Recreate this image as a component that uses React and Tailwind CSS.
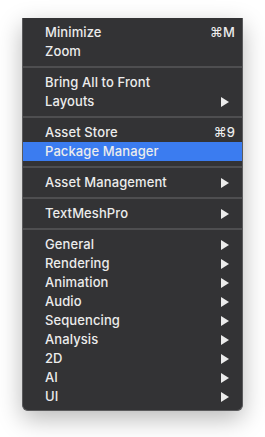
import React from 'react'

const sections = [
  [
    { label: 'Minimize', shortcut: '⌘M' },
    { label: 'Zoom' },
  ],
  [
    { label: 'Bring All to Front' },
    { label: 'Layouts', sub: true },
  ],
  [
    { label: 'Asset Store', shortcut: '⌘9' },
    { label: 'Package Manager', active: true },
  ],
  [{ label: 'Asset Management', sub: true }],
  [{ label: 'TextMeshPro', sub: true }],
  [
    { label: 'General', sub: true },
    { label: 'Rendering', sub: true },
    { label: 'Animation', sub: true },
    { label: 'Audio', sub: true },
    { label: 'Sequencing', sub: true },
    { label: 'Analysis', sub: true },
    { label: '2D', sub: true },
    { label: 'AI', sub: true },
    { label: 'UI', sub: true },
  ],
]

function Arrow() {
  return (
    <svg width="8" height="10" viewBox="0 0 8 10" className="mr-[13px]">
      <path d="M0 0 L8 5 L0 10 Z" fill="#ececec" />
    </svg>
  )
}

function Item({ item }) {
  return (
    <div
      className={`h-[19px] flex items-center justify-between pl-[22px] ${
        item.active ? 'bg-[#3b7cf0]' : ''
      }`}
    >
      <span>{item.label}</span>
      {item.shortcut && <span className="mr-[7px]">{item.shortcut}</span>}
      {item.sub && <Arrow />}
    </div>
  )
}

export default function App() {
  return (
    <div className="w-[265px] h-[437px] bg-white pt-[18px] pl-[22px] font-['Inter',sans-serif]">
      <div className="w-[221px] bg-[#333335] border border-t-0 border-[#5b5b5d] rounded-b-[6px] shadow-[0_8px_24px_rgba(0,0,0,0.28)] pt-[5px] pb-[4px] text-[13px] font-medium tracking-[0.1px] leading-none text-[#ececec]">
        {sections.map((sec, i) => (
          <div key={i}>
            {i > 0 && (
              <div className="h-[12px] flex items-center">
                <div className="w-full h-[2px] bg-[#4e4e50]" />
              </div>
            )}
            {sec.map((item) => (
              <Item key={item.label} item={item} />
            ))}
          </div>
        ))}
      </div>
    </div>
  )
}
